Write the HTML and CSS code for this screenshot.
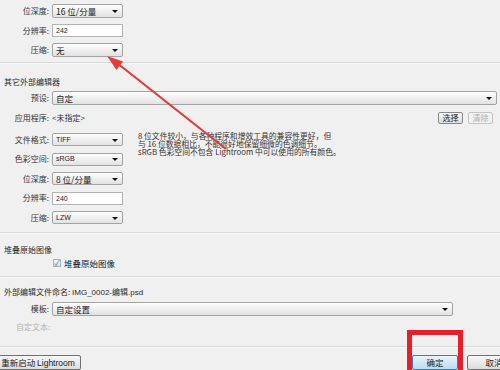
FILE: index.html
```html
<!DOCTYPE html>
<html lang="zh-CN">
<head>
    <meta charset="UTF-8">
    <title>外部编辑</title>
    <link rel="stylesheet" href="styles.css">
</head>
<body>

    <div class="panel">
        <div class="rows top-rows">
            <div class="row"><span class="lbl">位深度:</span><div class="sel small"><span class="val">16 位/分量</span></div></div>
            <div class="row"><span class="lbl">分辨率:</span><div class="field">242</div></div>
            <div class="row"><span class="lbl">压缩:</span><div class="sel small"><span class="val">无</span></div></div>
        </div>

        <div class="sep"></div>

        <div class="heading">其它外部编辑器</div>
        <div class="row preset-row"><span class="lbl">预设:</span><div class="sel preset"><span class="val">自定</span></div></div>
        <div class="row app-row">
            <span class="lbl">应用程序:</span>
            <span class="app-path">&lt;未指定&gt;</span>
            <div class="app-btns">
                <button class="btn">选择</button>
                <button class="btn" disabled>清除</button>
            </div>
        </div>

        <div class="opts">
            <div class="rows opt-rows">
                <div class="row"><span class="lbl">文件格式:</span><div class="sel small"><span class="val latin">TIFF</span></div></div>
                <div class="row"><span class="lbl">色彩空间:</span><div class="sel small"><span class="val latin">sRGB</span></div></div>
                <div class="row"><span class="lbl">位深度:</span><div class="sel small"><span class="val">8 位/分量</span></div></div>
                <div class="row"><span class="lbl">分辨率:</span><div class="field">240</div></div>
                <div class="row"><span class="lbl">压缩:</span><div class="sel small"><span class="val latin">LZW</span></div></div>
            </div>
            <p class="note">
                8 位文件较小，与各种程序和增效工具的兼容性更好，但<br>
                与 16 位数据相比，不能很好地保留细微的色调细节。<br>
                sRGB 色彩空间不包含 Lightroom 中可以使用的所有颜色。
            </p>
        </div>

        <div class="sep sep-stack"></div>

        <div class="heading stack-head">堆叠原始图像</div>
        <div class="check-row">
            <span class="box">✓</span><span class="check-lbl">堆叠原始图像</span>
        </div>

        <div class="sep sep-name"></div>

        <div class="heading name-head">外部编辑文件命名: <span class="latin">IMG_0002-</span>编辑<span class="latin">.psd</span></div>
        <div class="row tpl-row"><span class="lbl">模板:</span><div class="sel tpl"><span class="val">自定设置</span></div></div>
        <div class="custom-text">自定文本:</div>

        <div class="sep sep-bottom"></div>

        <div class="footer">
            <button class="btn big-btn restart">重新启动 <span class="latin">Lightroom</span></button>
            <div class="footer-right">
                <button class="btn big-btn ok">确定</button>
                <button class="btn big-btn cancel">取消</button>
            </div>
        </div>
    </div>

    <!-- annotations drawn over the screenshot -->
    <svg class="arrow" width="500" height="370" viewBox="0 0 500 370">
        <line x1="226" y1="149" x2="117" y2="63" stroke="#e63b3b" stroke-width="2.2"/>
        <polygon points="107,56 123,61.5 116.5,70" fill="#e63b3b"/>
    </svg>
    <div class="mark"></div>

</body>
</html>
```

FILE: styles.css
```css
html {
    overflow: hidden;
}

body {
    margin: 0;
    width: 500px;
    height: 370px;
    overflow: hidden;
    position: relative;
    background-color: #f0f0f0;
    font-family: "Noto Sans CJK SC", "Liberation Sans", sans-serif;
    font-size: 8px;
    line-height: 10px;
    color: #2e2e2e;
}

.latin {
    font-family: "Liberation Sans", sans-serif;
}

.panel {
    display: flex;
    flex-direction: column;
}

.rows {
    display: flex;
    flex-direction: column;
}

.top-rows {
    padding-top: 4px;
    gap: 5.5px;
}

.row {
    display: flex;
    align-items: center;
    height: 14px;
    gap: 3px;
}

.lbl {
    width: 49px;
    flex: none;
    text-align: right;
    color: #333;
}

.sel {
    position: relative;
    height: 14px;
    box-sizing: border-box;
    border: 1px solid #a4a4a4;
    border-radius: 2px;
    background: linear-gradient(#fdfdfd, #e2e2e2);
    padding-left: 3px;
    display: flex;
    align-items: center;
}

.sel::after {
    content: "";
    position: absolute;
    right: 4px;
    top: 5px;
    border-left: 3px solid transparent;
    border-right: 3px solid transparent;
    border-top: 3px solid #111;
}

.val {
    font-size: 8.5px;
    color: #222;
}

.val.latin {
    font-size: 7px;
}

.small {
    width: 71px;
}

.preset {
    width: 445px;
}

.tpl {
    width: 401px;
}

.field {
    width: 71px;
    height: 13px;
    box-sizing: border-box;
    border: 1px solid #b4b4b4;
    background-color: #fff;
    padding-left: 3px;
    font-family: "Liberation Sans", sans-serif;
    font-size: 7px;
    line-height: 11px;
    color: #222;
}

.sep {
    height: 0;
    border-top: 1px solid #d9d9d9;
    border-bottom: 1px solid #f8f8f8;
    margin-top: 5px;
}

.heading {
    padding-left: 4px;
    margin-top: 13px;
    color: #2a2a2a;
}

.preset-row {
    margin-top: 4px;
}

.app-row {
    margin-top: 6px;
}

.app-path {
    color: #333;
}

.app-btns {
    margin-left: auto;
    margin-right: 7px;
    display: flex;
    gap: 5px;
}

.btn {
    font-family: "Noto Sans CJK SC", "Liberation Sans", sans-serif;
    font-size: 8px;
    line-height: 10px;
    height: 12px;
    width: 25px;
    padding: 0;
    border: 1px solid #8a8a8a;
    border-radius: 2px;
    background: linear-gradient(#f7f7f7, #dcdcdc);
    color: #222;
}

.btn:disabled {
    border-color: #c4c4c4;
    background: #f2f2f2;
    color: #b0b0b0;
}

.opts {
    display: flex;
    margin-top: 8px;
}

.opt-rows {
    gap: 6.5px;
}

.opt-rows .row {
    height: 13px;
}

.opt-rows .sel {
    height: 13px;
}

.opt-rows .sel::after {
    top: 4.5px;
}

.note {
    margin: -1px 0 0 15px;
    font-size: 7.8px;
    line-height: 7.8px;
    color: #333;
}

.sep-stack {
    margin-top: 8px;
}

.stack-head {
    margin-top: 11px;
}

.check-row {
    display: flex;
    align-items: center;
    height: 12px;
    margin-top: 2px;
    padding-left: 53px;
    gap: 3px;
}

.box {
    width: 8px;
    height: 8px;
    box-sizing: border-box;
    border: 1px solid #a9b3bd;
    background: linear-gradient(#f2f5f8, #dde3e9);
    font-size: 8px;
    line-height: 6px;
    text-align: center;
    color: #5b7d9e;
}

.check-lbl {
    font-size: 8.5px;
    color: #222;
}

.sep-name {
    margin-top: 7px;
}

.name-head {
    margin-top: 9px;
}

.tpl-row {
    margin-top: 4px;
}

.custom-text {
    margin-top: 6px;
    padding-left: 16px;
    color: #b4b4b4;
}

.sep-bottom {
    margin-top: 14px;
}

.footer {
    display: flex;
    align-items: center;
    margin-top: 7px;
}

.big-btn {
    height: 15px;
    font-size: 8.5px;
    line-height: 13px;
    border-color: #707070;
}

.restart {
    width: 86px;
    margin-left: -5px;
    white-space: nowrap;
}

.footer-right {
    margin-left: auto;
    display: flex;
    gap: 9px;
    margin-right: -21px;
}

.ok {
    width: 46px;
    border-color: #3c7fb1;
    background: linear-gradient(#e8f4fc, #bcdcf3);
}

.cancel {
    width: 54px;
}

.arrow {
    position: absolute;
    left: 0;
    top: 0;
    pointer-events: none;
}

.mark {
    position: absolute;
    left: 407px;
    top: 330px;
    width: 46px;
    height: 35px;
    border: 5px solid #e5202b;
    border-bottom: none;
    pointer-events: none;
}
```
